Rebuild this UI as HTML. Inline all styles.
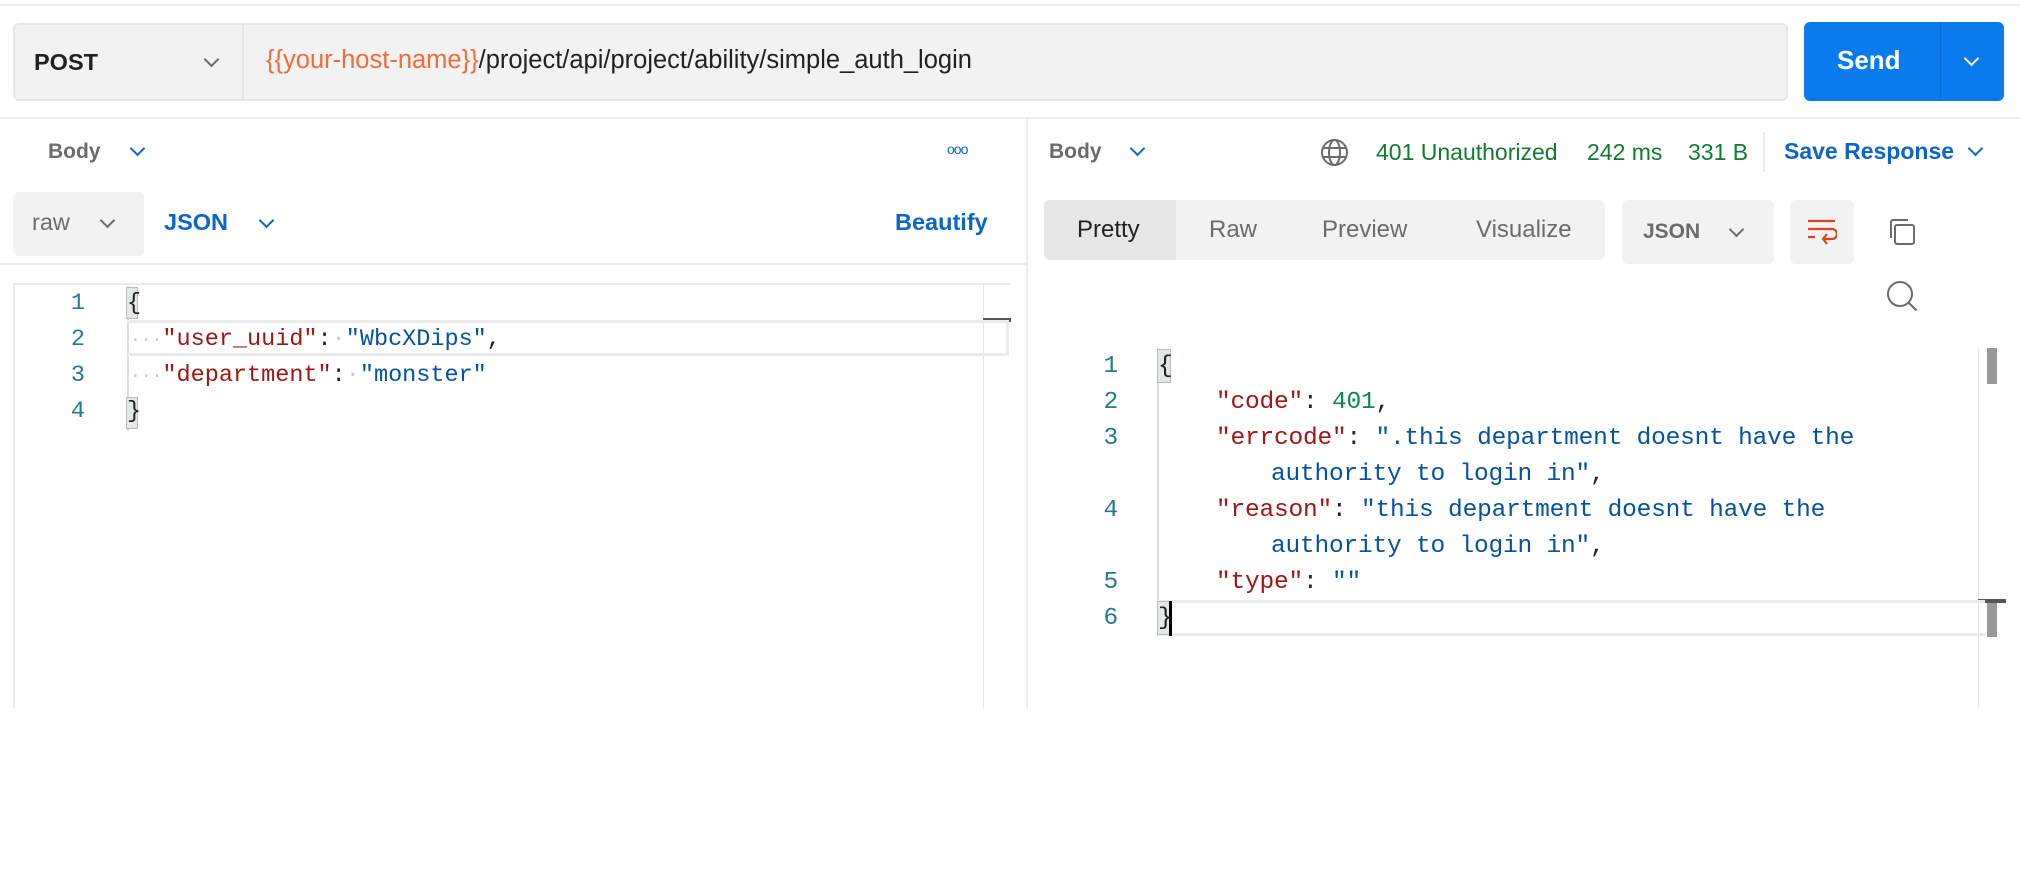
<!DOCTYPE html>
<html><head><meta charset="utf-8"><style>
*{margin:0;padding:0;box-sizing:border-box}
body{width:2020px;height:708px;background:#fff;position:relative;overflow:hidden;font-family:"Liberation Sans",sans-serif;font-size:22px;color:#212121}
.a{position:absolute;white-space:pre}
.m{font-family:"Liberation Mono","DejaVu Sans Mono",monospace}
.k{color:#a31515}.s{color:#0451a5}.n{color:#098658}
.ln{color:#237893;text-align:right;width:30px}
.chev{position:absolute;width:11px;height:11px;border-right:2px solid #6b6b6b;border-bottom:2px solid #6b6b6b;transform:rotate(45deg)}
.bl{border-color:#0b65cc}
.dot{color:#c8c8c8}
</style></head><body>
<div class="a" style="left:0;top:4px;width:2020px;height:2px;background:#ececec"></div>
<!-- URL bar -->
<div class="a" style="left:13px;top:23px;width:1775px;height:78px;background:#f2f2f2;border:2px solid #e6e6e6;border-radius:6px"></div>
<div class="a" style="left:242px;top:24px;width:2px;height:76px;background:#e4e4e4"></div>
<div class="a" style="left:34px;top:49px;font-weight:bold;font-size:23.5px;color:#212121">POST</div>
<div class="chev" style="left:206px;top:54px"></div>
<div class="a" style="left:266px;top:46px;font-size:25.5px"><span style="color:#f26b3a">{{your-host-name}}</span>/project/api/project/ability/simple_auth_login</div>
<div class="a" style="left:1804px;top:22px;width:200px;height:79px;background:#097bed;border-radius:6px"></div>
<div class="a" style="left:1940px;top:22px;width:1px;height:79px;background:#0a6bd0"></div>
<div class="a" style="left:1837px;top:45px;color:#fff;font-weight:bold;font-size:26px">Send</div>
<div class="chev" style="left:1966px;top:53px;border-color:#fff"></div>
<div class="a" style="left:0;top:117px;width:2020px;height:2px;background:#ececec"></div>
<div class="a" style="left:1026px;top:118px;width:2px;height:590px;background:#ececec"></div>
<!-- left -->
<div class="a" style="left:48px;top:140px;color:#6b6b6b;font-weight:bold;font-size:21px">Body</div>
<div class="chev bl" style="left:132px;top:143px"></div>
<div class="a" style="left:947px;top:141px;color:#0b65cc;font-size:14px;letter-spacing:-1px">ooo</div>
<div class="a" style="left:13px;top:192px;width:131px;height:64px;background:#f2f2f2;border-radius:6px"></div>
<div class="a" style="left:32px;top:209px;color:#6b6b6b;font-size:23.5px">raw</div>
<div class="chev" style="left:102px;top:215px"></div>
<div class="a" style="left:164px;top:209px;color:#0b65cc;font-weight:bold;font-size:23.5px">JSON</div>
<div class="chev bl" style="left:261px;top:215px"></div>
<div class="a" style="left:895px;top:209px;color:#0b65cc;font-weight:bold;font-size:23.5px">Beautify</div>
<div class="a" style="left:0;top:263px;width:1027px;height:2px;background:#ececec"></div>
<div class="a" style="left:13px;top:283px;width:998px;height:425px;border-left:2px solid #ececec;border-top:2px solid #ececec"></div>
<div class="a" style="left:983px;top:283px;width:1px;height:425px;background:#e4e4e4"></div>
<div class="a" style="left:983px;top:318px;width:28px;height:4px;background:#555"></div>
<div class="a" style="left:127px;top:286px;width:2px;height:145px;background:#ddd"></div>
<div class="a" style="left:127px;top:320px;width:882px;height:36px;border:3px solid #eaeaea;border-left:none"></div>
<div class="a m" style="left:126px;top:287px;width:12px;height:32px;background:#e4e8e4;border:1px solid #bbb"></div>
<div class="a m" style="left:126px;top:397px;width:12px;height:32px;background:#e4e8e4;border:1px solid #bbb"></div>
<div class="a m" style="font-size:23.5px;left:40px;top:286px;line-height:36px">
<div class="ln" style="position:absolute;left:15px;top:0">1</div><div class="ln" style="position:absolute;left:15px;top:36px">2</div><div class="ln" style="position:absolute;left:15px;top:72px">3</div><div class="ln" style="position:absolute;left:15px;top:108px">4</div>
<div style="position:absolute;left:87px;top:0">{</div>
<div style="position:absolute;left:90px;top:36px;white-space:pre"><span class="dot" style="font-size:18px">···</span><span class="k">"user_uuid"</span>:<span class="dot">·</span><span class="s">"WbcXDips"</span>,</div>
<div style="position:absolute;left:90px;top:72px;white-space:pre"><span class="dot" style="font-size:18px">···</span><span class="k">"department"</span>:<span class="dot">·</span><span class="s">"monster"</span></div>
<div style="position:absolute;left:87px;top:108px">}</div>
</div>
<!-- right -->
<div class="a" style="left:1049px;top:140px;color:#6b6b6b;font-weight:bold;font-size:21px">Body</div>
<div class="chev bl" style="left:1132px;top:143px"></div>
<svg class="a" style="left:1320px;top:138px" width="29" height="29" viewBox="0 0 29 29" fill="none" stroke="#6b6b6b" stroke-width="2"><circle cx="14.5" cy="14.5" r="12.5"/><ellipse cx="14.5" cy="14.5" rx="5.5" ry="12.5"/><path d="M3 10h23M3 19h23"/></svg>
<div class="a" style="left:1376px;top:139px;color:#0f7b2f;font-size:23px">401 Unauthorized</div>
<div class="a" style="left:1587px;top:139px;color:#0f7b2f;font-size:23px">242 ms</div>
<div class="a" style="left:1688px;top:139px;color:#0f7b2f;font-size:23px">331 B</div>
<div class="a" style="left:1763px;top:132px;width:2px;height:40px;background:#ececec"></div>
<div class="a" style="left:1784px;top:138px;color:#0b65cc;font-weight:bold;font-size:23px">Save Response</div>
<div class="chev bl" style="left:1970px;top:143px"></div>
<div class="a" style="left:1044px;top:200px;width:561px;height:60px;background:#f2f2f2;border-radius:6px"></div>
<div class="a" style="left:1044px;top:200px;width:132px;height:60px;background:#e6e6e6;border-radius:6px 0 0 6px"></div>
<div class="a" style="left:1077px;top:216px;font-size:24px;color:#212121">Pretty</div>
<div class="a" style="left:1209px;top:216px;font-size:24px;color:#6b6b6b">Raw</div>
<div class="a" style="left:1322px;top:216px;font-size:24px;color:#6b6b6b">Preview</div>
<div class="a" style="left:1476px;top:216px;font-size:24px;color:#6b6b6b">Visualize</div>
<div class="a" style="left:1622px;top:200px;width:152px;height:64px;background:#f2f2f2;border-radius:6px"></div>
<div class="a" style="left:1643px;top:220px;font-size:21px;color:#6b6b6b;font-weight:bold">JSON</div>
<div class="chev" style="left:1731px;top:224px"></div>
<div class="a" style="left:1790px;top:200px;width:64px;height:64px;background:#f2f2f2;border-radius:6px"></div>
<svg class="a" style="left:1805px;top:218px" width="32" height="30" viewBox="0 0 32 30" fill="none" stroke="#d9431e" stroke-width="2.2"><path d="M3 3h27M3 11h24a5 5 0 0 1 0 10h-8M3 19h7M22 16l-4 5 4 5"/></svg>
<svg class="a" style="left:1886px;top:216px" width="32" height="32" viewBox="0 0 32 32" fill="none" stroke="#6b6b6b" stroke-width="2"><rect x="9" y="9" width="19" height="19" rx="2"/><path d="M5 22V6a2 2 0 0 1 2-2h15"/></svg>
<svg class="a" style="left:1885px;top:279px" width="34" height="34" viewBox="0 0 34 34" fill="none" stroke="#6b6b6b" stroke-width="2"><circle cx="15" cy="15" r="12"/><path d="M23.5 23.5l8 8"/></svg>
<div class="a" style="left:1978px;top:348px;width:1px;height:360px;background:#e4e4e4"></div>
<div class="a" style="left:1987px;top:348px;width:10px;height:36px;background:#999"></div>
<div class="a" style="left:1978px;top:599px;width:28px;height:4px;background:#555"></div>
<div class="a" style="left:1987px;top:603px;width:10px;height:34px;background:#999"></div>
<div class="a" style="left:1157px;top:348px;width:2px;height:288px;background:#ddd"></div>
<div class="a" style="left:1157px;top:600px;width:828px;height:36px;border-top:3px solid #eaeaea;border-bottom:3px solid #eaeaea"></div>
<div class="a" style="left:1157px;top:349px;width:14px;height:34px;background:#e4e8e4;border:1px solid #bbb"></div>
<div class="a" style="left:1157px;top:601px;width:14px;height:34px;background:#e4e8e4;border:1px solid #bbb"></div>
<div class="a" style="left:1169px;top:601px;width:3px;height:35px;background:#000"></div>
<div class="a m" style="font-size:24.5px;left:0;top:349px;line-height:36px;letter-spacing:-0.2px">
<div class="ln" style="position:absolute;left:1088px;top:0">1</div>
<div class="ln" style="position:absolute;left:1088px;top:36px">2</div>
<div class="ln" style="position:absolute;left:1088px;top:72px">3</div>
<div class="ln" style="position:absolute;left:1088px;top:144px">4</div>
<div class="ln" style="position:absolute;left:1088px;top:216px">5</div>
<div class="ln" style="position:absolute;left:1088px;top:252px">6</div>
<div style="position:absolute;left:1158px;top:0">{</div>
<div style="position:absolute;left:1216px;top:36px;white-space:pre"><span class="k">"code"</span>: <span class="n">401</span>,</div>
<div style="position:absolute;left:1216px;top:72px;white-space:pre"><span class="k">"errcode"</span>: <span class="s">".this department doesnt have the</span></div>
<div style="position:absolute;left:1271px;top:108px;white-space:pre"><span class="s">authority to login in"</span>,</div>
<div style="position:absolute;left:1216px;top:144px;white-space:pre"><span class="k">"reason"</span>: <span class="s">"this department doesnt have the</span></div>
<div style="position:absolute;left:1271px;top:180px;white-space:pre"><span class="s">authority to login in"</span>,</div>
<div style="position:absolute;left:1216px;top:216px;white-space:pre"><span class="k">"type"</span>: <span class="s">""</span></div>
<div style="position:absolute;left:1158px;top:252px">}</div>
</div>
</body></html>
